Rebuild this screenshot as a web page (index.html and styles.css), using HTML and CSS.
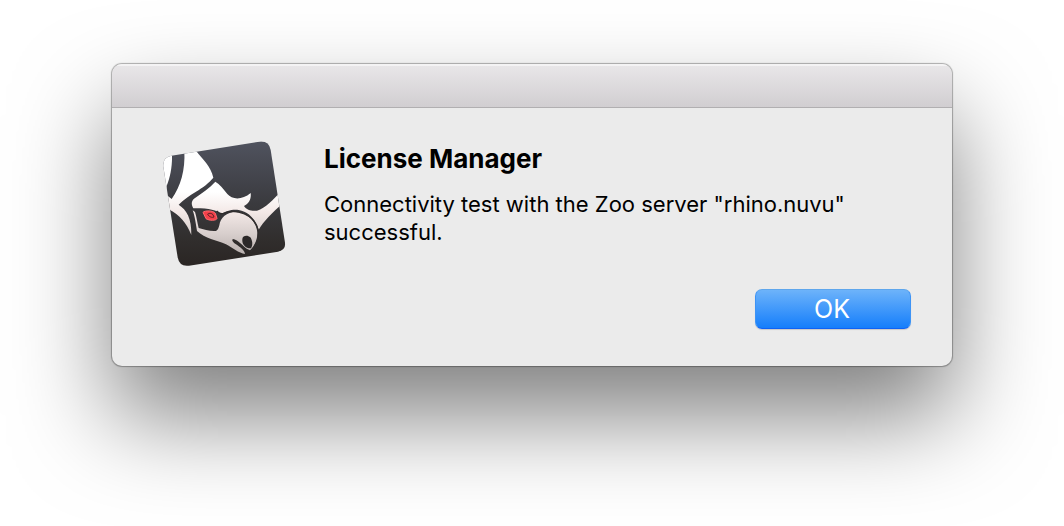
FILE: index.html
```html
<!DOCTYPE html>
<html lang="en">
<head>
  <meta charset="UTF-8" />
  <meta name="viewport" content="width=device-width, initial-scale=1.0"/>
  <title>License Manager</title>
  <link rel="stylesheet" href="styles.css">
</head>
<body>
  <div class="dialog" role="alertdialog" aria-labelledby="title" aria-describedby="message">
    <div class="titlebar"></div>
    <div class="content">
      <svg class="icon" viewBox="18 15 384 384" aria-hidden="true">
        <defs>
          <linearGradient id="tile" x1="0" y1="0" x2="0" y2="1">
            <stop offset="0" stop-color="#50535f"/>
            <stop offset="0.5" stop-color="#3a3a3e"/>
            <stop offset="0.8" stop-color="#302d2c"/>
            <stop offset="1" stop-color="#2a2523"/>
          </linearGradient>
          <linearGradient id="skin" gradientUnits="userSpaceOnUse" x1="0" y1="50" x2="0" y2="360">
            <stop offset="0.4" stop-color="#ffffff"/>
            <stop offset="0.6" stop-color="#f3e8e6"/>
            <stop offset="0.8" stop-color="#d8cfcd"/>
            <stop offset="1" stop-color="#b9b1af"/>
          </linearGradient>
          <clipPath id="shape">
            <path d="M52 65L316 23Q345 20 350 48L393 326Q396 347 372 353L105 395Q76 399 71 370L28 98Q25 70 52 65Z"/>
          </clipPath>
        </defs>
        <g clip-path="url(#shape)">
          <path fill="url(#tile)" d="M20 20H400V400H20Z"/>
          <path fill="url(#skin)" d="M20 60L54 60C55 98 49 128 38 156L39 182L24 190Z"/>
          <path fill="url(#skin)" d="M91 50L126 50C146 76 170 95 178 131C166 146 146 161 126 173C106 185 88 198 74 212C98 228 113 252 112 303C97 266 78 244 44 226L34 180L53 195C80 155 94 110 91 50Z"/>
          <path fill="url(#skin)" d="M184 143C197 150 209 166 220 180C234 197 264 199 290 177C292 194 286 209 270 216C278 229 294 232 309 230C335 222 355 200 385 168L388 208C352 237 330 262 314 287C306 258 286 234 254 228C230 226 216 232 203 240C188 228 160 222 118 223C111 211 112 202 120 194C143 178 166 163 184 143Z"/>
          <path fill="url(#skin)" d="M196 274C199 250 218 235 246 234C281 235 306 263 310 294C311 317 302 334 288 349L278 344C260 330 252 318 237 315C232 319 236 324 246 331C258 340 272 348 273 360C255 358 234 341 216 331C188 318 153 314 129 291C125 267 122 244 116 229L123 234C128 250 130 266 134 282C150 286 169 293 186 291C192 288 194 282 196 274Z"/>
          <path fill="none" stroke="#302d2d" stroke-width="4" d="M188 231C196 239 202 241 209 238C248 221 302 244 312 287C316 309 306 334 291 354"/>
          <path fill="#2b2828" d="M265 315C266 304 281 302 289 310C296 320 297 334 291 343C277 344 263 333 265 315Z"/>
          <path fill="#f4404a" stroke="#ff6b70" stroke-width="3" d="M147 235C152 229 178 229 184 238L189 253C188 261 164 260 156 254Z"/>
          <path fill="#f4404a" stroke="#5c2226" stroke-width="3" d="M161 240C163 237 174 237 177 242L180 249C176 252 164 249 161 240Z"/>
        </g>
      </svg>
      <div class="details">
        <h1 id="title">License Manager</h1>
        <p id="message">Connectivity test with the Zoo server "rhino.nuvu" successful.</p>
        <div class="actions">
          <button type="button" class="ok">OK</button>
        </div>
      </div>
    </div>
  </div>
</body>
</html>
```
FILE: styles.css
```css
* {
  box-sizing: border-box;
}
body {
  margin: 0;
  padding: 64px 112px 0;
  min-height: 100vh;
  overflow: hidden;
  background: #fff;
  color: #000;
  font-family: Inter, "Liberation Sans", sans-serif;
}
.dialog {
  overflow: hidden;
  border-radius: 10px;
  background: #ebebeb;
  box-shadow: 0 0 1px 1px rgba(0,0,0,0.3), 0 50px 96px rgba(0,0,0,0.5);
}
.titlebar {
  height: 44px;
  border-top: 2px solid #f4f3f4;
  border-bottom: 1px solid #b1afb1;
  background: linear-gradient(#e8e6e8, #d1ced1);
}
.content {
  display: flex;
  gap: 36px;
  padding: 31px 41px 37px 48px;
}
.icon {
  width: 128px;
  height: 128px;
  flex: none;
}
.details {
  flex: 1;
}
h1 {
  margin: 4px 0 15px;
  font-size: 26px;
  line-height: 32px;
}
p {
  margin: 0;
  font-size: 22px;
  line-height: 28px;
}
.actions {
  display: flex;
  justify-content: flex-end;
  margin-top: 43px;
}
.ok {
  width: 156px;
  height: 40px;
  padding: 0 2px 0 0;
  border: 1px solid #3d93f5;
  border-top-color: #5ea6ec;
  border-bottom-color: #0f62f5;
  border-radius: 7px;
  background: linear-gradient(#6db3fa, #157efb);
  box-shadow: 0 1px 1px rgba(0,0,0,0.15);
  color: #fff;
  font-family: inherit;
  font-size: 25px;
}
```
